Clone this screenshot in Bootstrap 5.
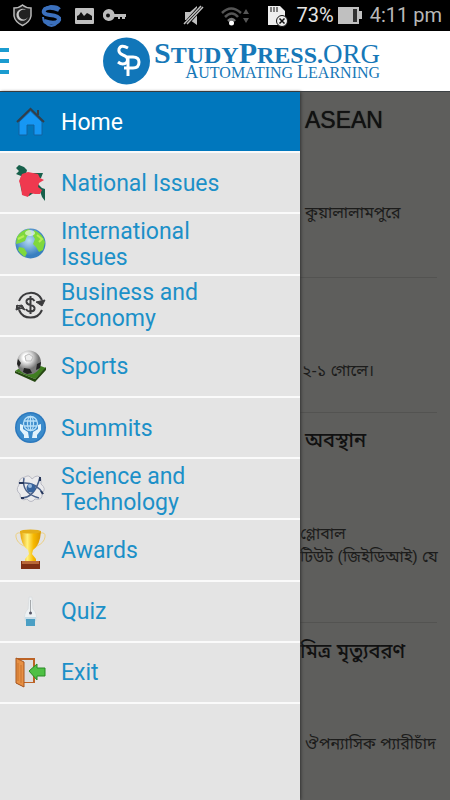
<!DOCTYPE html>
<html lang="en">
<head>
<meta charset="utf-8">
<meta name="viewport" content="width=device-width, initial-scale=1">
<title>StudyPress.org</title>
<link href="https://cdn.jsdelivr.net/npm/bootstrap@5.3.0/dist/css/bootstrap.min.css" rel="stylesheet">
<style>
body { font-family: Roboto, "Noto Sans", sans-serif; background: #5e5e5c; }
svg { display: block; flex: none; }
.status-bar { background: #000; color: #b8b8b8; height: 31px; font-size: 20px; line-height: 31px; padding-left: 12px; padding-right: 8px; }
.status-bar .pct { color: #e4e4e4; }
.app-bar { background: #fff; height: 61px; border-bottom: 1px solid #3d4245; }
.menu-btn { width: 9px; margin-right: 94px; }
.brand { color: #1678b8; font-family: "Liberation Serif", serif; text-transform: uppercase; }
.brand-name { font-size: 24px; line-height: 20px; font-weight: 700; }
.brand-name .cap { font-size: 30px; }
.brand-name .tld { font-weight: 400; font-size: 27px; }
.brand-tag { font-size: 16px; line-height: 14px; }
.brand-tag .cap { font-size: 18px; }
.drawer { background: #e4e4e4; min-height: calc(100vh - 92px); box-shadow: 1px 0 3px #333; z-index: 1; }
.drawer-list { grid-auto-rows: 1fr; height: 612px; }
.drawer-link { padding-left: 15px; gap: 15px; color: #1c90c8; font-size: 23px; line-height: 26px; border-bottom: 2px solid #fafafa; }
.drawer-link:hover { color: #0077bd; }
.drawer-link.active { background: #0077bd; color: #fff; }
.drawer-label { max-width: 160px; padding-top: 2px; }
.feed { color: #1c1c1b; font-family: "Liberation Sans", "Noto Sans Bengali", sans-serif; }
.story { margin-right: 13px; padding-left: 5px; border-bottom: 1px solid #535351; }
.story h2 { font-size: 20px; line-height: 28px; color: #111; }
.story h2:lang(en) { font-size: 23px; text-shadow: 0 0 1px #111; }
.story p { font-size: 16px; line-height: 23px; }
.story-1 { height: 186px; padding-top: 14px; }
.story-1 p { padding-top: 67px; }
.story-2 { height: 135px; padding-top: 81px; padding-left: 2px; }
.story-3 { height: 210px; padding-top: 13px; }
.story-3 p { padding-top: 68px; }
.story-4 { padding-top: 14px; border: 0; }
.story-4 p { padding-top: 67px; }
.edge { margin-left: -5px; }
</style>
<script src="https://cdn.jsdelivr.net/npm/bootstrap@5.3.0/dist/js/bootstrap.bundle.min.js"></script>
</head>
<body class="min-vh-100 d-flex flex-column overflow-x-hidden">
<div class="status-bar d-flex align-items-center justify-content-between">
  <div class="d-flex align-items-center gap-2">
    <svg width="21" height="23" viewBox="0 0 21 23"><path d="M2 4Q7 4 10.500 1Q14 4 19 4V12Q18 18 10.500 21.500Q3 18 2 12Z" fill="#222" stroke="#b8b8b8" stroke-width="1.500"/><path d="M14 6A6 6 0 1 0 16 13A5 5 0 1 1 14 6Z" fill="#c8c8c8"/></svg>
    <svg width="21" height="22" viewBox="0 0 21 22"><path d="M18 5Q9 1 4 4Q0 9 9 10Q19 11 18 15Q15 20 3 16" fill="none" stroke="#3b70bd" stroke-width="4"/><path d="M2 12Q2 19 10.500 21Q19 19 19 12M2 8Q2 3 10 1Q17 1 19 4" fill="none" stroke="#3b70bd" stroke-width="2"/></svg>
    <svg class="ms-1" width="21" height="18" viewBox="0 0 21 18"><rect x="1" y="1" width="19" height="16" rx="1" fill="#c0c0c0"/><path d="M3 13V9L5 8L7 5L10 9L13 6L15 7L18 9V13Z" fill="#111"/></svg>
    <svg width="24" height="13" viewBox="0 0 24 13"><path d="M6 0A6 6 0 1 0 11.500 8H15V10H17V8H19V10H22V8H23V5H11.500A6 6 0 0 0 6 0Z" fill="#bbb"/><circle cx="5" cy="6.500" r="2" fill="#111"/></svg>
  </div>
  <div class="d-flex align-items-center">
    <svg class="me-3" width="22" height="22" viewBox="0 0 22 22"><path d="M2 7H7L14 1V20L7 15H2Z" fill="#c0c0c0"/><path d="M2 20L19 1" stroke="#000" stroke-width="5"/><path d="M1 19L18 1M4 19L20 2" stroke="#c0c0c0" stroke-width="1.500"/></svg>
    <svg width="30" height="22" viewBox="0 0 30 22"><g fill="none" stroke="#555" stroke-width="2.500"><path d="M1 8Q10 -1 20 8"/><path d="M4 12Q11 5 17 12"/><path d="M7 16Q11 12 14 16" stroke="#777"/></g><circle cx="10.500" cy="18" r="2.500" fill="#fff"/><path d="M22 9L25 4L28 9ZM22 13H28L25 18Z" fill="#555"/></svg>
    <svg class="ms-3" width="22" height="22" viewBox="0 0 22 22"><path d="M1 1H13L18 6V20H1Z" fill="#eee"/><path d="M4 2V7M7 2V7M10 2V7" stroke="#111"/><circle cx="15" cy="16" r="5.500" fill="#eee" stroke="#111"/><path d="M12.500 13.500L17.500 18.500M17.500 13.500L12.500 18.500" stroke="#111" stroke-width="1.500"/></svg>
    <span class="pct ms-2">73%</span>
    <svg class="ms-1 me-2" width="24" height="17" viewBox="0 0 24 17"><path d="M0 0H21V4H24V12H21V17H0Z" fill="#c0c0c0"/><path d="M15 2H19V15H15Z" fill="#333"/></svg>
    <span>4:11 pm</span>
  </div>
</div>

<header class="app-bar d-flex align-items-center">
  <button type="button" class="menu-btn btn p-0 border-0" aria-label="Menu"><svg width="9" height="28" viewBox="0 0 9 28"><path d="M0 3H9M0 14H9M0 25H9" stroke="#1b9cd0" stroke-width="4"/></svg></button>
  <a href="#" class="brand d-flex align-items-center text-decoration-none gap-1">
    <svg width="47" height="48" viewBox="0 0 47 48"><circle cx="23.500" cy="24" r="23.500" fill="#1176b9"/><path d="M25 11Q18 7 16 12Q15 16 20 18Q26 20 24 25Q20 29 15 25M25 39V20H30Q36 20 36 25Q36 31 30 31H21" fill="none" stroke="#fff" stroke-width="3"/></svg>
    <span class="text-end text-nowrap">
      <span class="brand-name d-block"><span class="cap">S</span>tudy<span class="cap">P</span>ress.<span class="tld">org</span></span>
      <span class="brand-tag d-block"><span class="cap">A</span>utomating <span class="cap">L</span>earning</span>
    </span>
  </a>
</header>

<div class="row g-0 flex-grow-1">
  <nav class="drawer col-8" aria-label="Sections">
   <div class="drawer-list d-grid">
    <a href="#" class="drawer-link active d-flex align-items-center text-decoration-none"><svg width="31" height="40" viewBox="0 0 31 40"><path d="M4 20L15.500 9L27 20V33H19V23H12V33H4Z" fill="#1697f4" stroke="#1262a0"/><path d="M2 20L15.500 7L29 20M23 8V13" fill="none" stroke="#333e49" stroke-width="2"/></svg><span class="drawer-label">Home</span></a>
    <a href="#" class="drawer-link d-flex align-items-center text-decoration-none"><svg width="31" height="40" viewBox="0 0 31 40"><path d="M4 2L9 4L12 7L11 11L17 10L28 10L26 15L20 18L27 25L30 26V38L27 34L25 28L20 29L14 33L8 32L6 26L5 19L6 13L1 11L4 8L1 5Z" fill="#17604b"/><path d="M7 11L13 9L23 11L25 15L29 17L24 20L23 24L27 27L25 31L20 31L15 30L13 34L7 32L6 24L4 18Z" fill="#ef394f"/></svg><span class="drawer-label">National Issues</span></a>
    <a href="#" class="drawer-link d-flex align-items-center text-decoration-none"><svg width="31" height="31" viewBox="0 0 31 31"><defs><radialGradient id="sea" cx=".45" cy=".4"><stop stop-color="#b9ddf4"/><stop offset="1" stop-color="#387fc0"/></radialGradient></defs><circle cx="15.500" cy="15.500" r="15" fill="url(#sea)"/><path d="M2 9Q6 2 14 1L17 6L12 8L10 13L5 15L1 16ZM19 2Q28 6 30 14L28 22L24 24L21 19L18 16L20 11L18 8ZM4 19L9 20L12 25L10 29Q5 26 3 22Z" fill="#7fd83d"/><path d="M22 7L27 11L24 14M3 11L9 8" stroke="#b6ee57" stroke-width="2" fill="none"/><ellipse cx="15" cy="5" rx="5" ry="3" fill="#fff" opacity=".6"/></svg><span class="drawer-label">International Issues</span></a>
    <a href="#" class="drawer-link d-flex align-items-center text-decoration-none"><svg width="31" height="31" viewBox="0 0 31 31"><path d="M4 11A12.500 12.500 0 0 1 27 10M27 20A12.500 12.500 0 0 1 4 20" fill="none" stroke="#3b3b3d" stroke-width="2"/><path d="M21 12L30 10L27 16ZM1 16L7 15L10 20ZM2 15L1 20L8 18Z" fill="#3b3b3d" stroke="#3b3b3d"/><path d="M19.500 11Q18 8.500 15.500 8.500Q11 9 11.500 12Q12 14.500 15.500 15Q20 16 19.500 19Q19 21.500 15.500 21.500Q12 21.500 11 19M15.500 6V24" fill="none" stroke="#3b3b3d" stroke-width="2"/></svg><span class="drawer-label">Business and Economy</span></a>
    <a href="#" class="drawer-link d-flex align-items-center text-decoration-none"><svg width="31" height="32" viewBox="0 0 31 32"><defs><radialGradient id="ball" cx=".4" cy=".3"><stop offset=".3" stop-color="#fff"/><stop offset="1" stop-color="#777"/></radialGradient></defs><path d="M0 21L15 12L31 18L20 29Z" fill="#3f7e20"/><path d="M0 21L20 29L31 17V20L20 32L0 23Z" fill="#254811"/><circle cx="14" cy="12.500" r="12" fill="url(#ball)"/><path d="M10 6L14 4L18 7L16 11H11Z" fill="#eee" stroke="#bbb"/><path d="M3 9L6 13L4 17L2 14ZM9 18L15 19L17 23L12 24L8 22ZM22 14L26 12L25 18L21 20Z" fill="#222"/></svg><span class="drawer-label">Sports</span></a>
    <a href="#" class="drawer-link d-flex align-items-center text-decoration-none"><svg width="31" height="31" viewBox="0 0 31 31"><circle cx="15.500" cy="15.500" r="15.500" fill="#2b78bd"/><circle cx="15.500" cy="15.500" r="14" fill="#3b8bcb"/><g fill="none" stroke="#b8e0f8" stroke-width="1.300"><circle cx="15.500" cy="11.500" r="7"/><ellipse cx="15.500" cy="11.500" rx="3" ry="7"/><path d="M9 9H22M9 14H22M15.500 5V18"/></g><path d="M5 12L8 13V17L13 20L14 26H9V23L5 18ZM26 12L23 13V17L18 20L17 26H22V23L26 18Z" fill="#e2f3fc"/></svg><span class="drawer-label">Summits</span></a>
    <a href="#" class="drawer-link d-flex align-items-center text-decoration-none"><svg width="31" height="31" viewBox="0 0 31 31"><path d="M10 4Q14 1 17 6Q23 0 26 6V11Q32 16 27 20Q28 28 20 26Q16 31 12 26Q5 29 5 21Q0 17 4 12Q3 5 10 4Z" fill="#ebebed" stroke="#b9bac4"/><g fill="none" stroke="#4b6189" stroke-width="1.500"><path d="M4 10Q21 8 28 21M6 25Q20 25 25 4M9 5Q6 20 24 25"/></g><circle cx="16" cy="15" r="4.500" fill="#38649d"/><circle cx="15" cy="13" r="2" fill="#9bbce0"/><path d="M4 10H9M25 4V8M6 25H9M26 18L28 21" stroke="#29395d" stroke-width="2"/></svg><span class="drawer-label">Science and Technology</span></a>
    <a href="#" class="drawer-link d-flex align-items-center text-decoration-none"><svg width="31" height="41" viewBox="0 0 31 41"><defs><linearGradient id="gold"><stop stop-color="#e8a000"/><stop offset=".35" stop-color="#fff17d"/><stop offset=".65" stop-color="#f7b900"/><stop offset="1" stop-color="#d79400"/></linearGradient></defs><path d="M6 4Q0 3 1 8Q2 14 9 17M25 4Q31 3 30 8Q29 14 22 17" fill="none" stroke="#ecd083" stroke-width="1"/><path d="M5 2H26Q25 17 18 21L17 25L21 30V33H10V30L14 25L13 21Q6 17 5 2Z" fill="url(#gold)"/><ellipse cx="15.500" cy="2.500" rx="10.500" ry="2" fill="#e5ae18"/><path d="M6 32H25V40H6Z" fill="#7e3013"/><path d="M7 32H24V35H7Z" fill="#b96837"/></svg><span class="drawer-label">Awards</span></a>
    <a href="#" class="drawer-link d-flex align-items-center text-decoration-none"><svg width="31" height="40" viewBox="0 0 31 40"><path d="M14 6H17L18 18Q23 23 21 30H10Q8 23 13 18Z" fill="#edf1f3" stroke="#dcdfe1"/><path d="M15.500 9V22" stroke="#a5a9ac" stroke-width="1"/><circle cx="15.500" cy="22" r="1.500" fill="#556"/><path d="M10 26H21V30H10Z" fill="#c8dce6"/><path d="M11 28H20V35H11Z" fill="#4b9fc4"/></svg><span class="drawer-label">Quiz</span></a>
    <a href="#" class="drawer-link d-flex align-items-center text-decoration-none"><svg width="31" height="31" viewBox="0 0 31 31"><path d="M1 1H20V26H9V30L1 26Z" fill="#bc6326"/><path d="M5 3H18V25H9Z" fill="#ddd"/><path d="M1 1L9 5V30L1 26Z" fill="#e79043" stroke="#a65621"/><path d="M3 6V24M6 8V26" stroke="#c97531"/><path d="M14 14L22 7V11H30V19H22V23Z" fill="#4ec044" stroke="#298a25"/></svg><span class="drawer-label">Exit</span></a>
   </div>
  </nav>
  <main class="feed col-4 text-nowrap" lang="bn">
    <article class="story story-1"><h2 class="mb-0" lang="en">ASEAN</h2><p class="mb-0">কুয়ালালামপুরে</p></article>
    <article class="story story-2"><p class="mb-0">২-১ গোলে।</p></article>
    <article class="story story-3"><h2 class="mb-0">অবস্থান</h2><p class="edge mb-0">গ্লোবাল<br>টিউট (জিইডিআই) যে</p></article>
    <article class="story story-4"><h2 class="edge mb-0">মিত্র মৃত্যুবরণ</h2><p class="mb-0">ঔপন্যাসিক প্যারীচাঁদ</p></article>
  </main>
</div>
</body>
</html>
